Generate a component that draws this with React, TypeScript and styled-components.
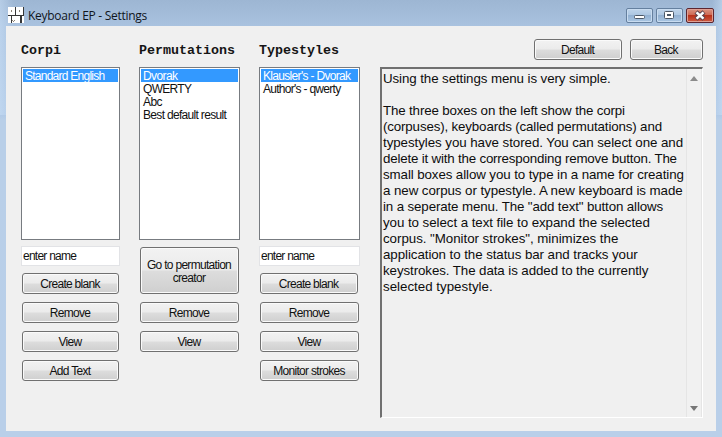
import React from 'react';
import styled, { createGlobalStyle } from 'styled-components';

const GlobalStyle = createGlobalStyle`
  *, *::before, *::after { box-sizing: border-box; }
  html, body { margin: 0; padding: 0; overflow: hidden; }
`;

const Window = styled.div`
  width: 722px;
  height: 437px;
  padding: 0 6px 6px;
  display: flex;
  flex-direction: column;
  color: #111;
  font-family: 'Liberation Sans', Arial, sans-serif;
  font-size: 12px;
  background:
    linear-gradient(90deg, rgba(205, 226, 248, 0.5), rgba(205, 226, 248, 0) 14px) 0 0 / 100% 115px no-repeat,
    linear-gradient(270deg, rgba(205, 226, 248, 0.5), rgba(205, 226, 248, 0) 10px) 0 0 / 100% 115px no-repeat,
    linear-gradient(180deg, #9db6d3 0, #a9c2df 26px, #b1cae7 115px, #b9cfe8 120px, #b9cfe9 100%);
`;

const TitleBar = styled.header`
  height: 26px;
  flex: none;
  display: flex;
  align-items: flex-start;
  padding: 7px 2px 0;
`;

const AppIcon = styled.svg`
  width: 16px;
  height: 16px;
  flex: none;
`;

const Title = styled.h1`
  margin: 1px 0 0 4px;
  font: 400 12px/16px 'Open Sans', 'Noto Sans', sans-serif;
  letter-spacing: -0.28px;
  color: #10151c;
  white-space: nowrap;
`;

const Controls = styled.div`
  display: flex;
  gap: 3px;
  margin: 1px 0 0 auto;
`;

const Control = styled.button<{ $danger?: boolean }>`
  width: ${(p) => (p.$danger ? 28 : 27)}px;
  height: 15px;
  padding: 0;
  display: flex;
  border: 1px solid ${(p) => (p.$danger ? '#5c2630' : '#65809f')};
  border-radius: 2px;
  box-shadow: inset 0 0 0 1px ${(p) => (p.$danger ? '#dfa094' : '#c9dcf0')};
  background: ${(p) =>
    p.$danger
      ? 'linear-gradient(#d99583 0, #cf6a55 45%, #b8321b 50%, #cf5b42 100%)'
      : 'linear-gradient(#bfd4ea 0, #adc7e2 45%, #93b1d2 50%, #aac6e3 100%)'};
`;

const Client = styled.main`
  flex: 1;
  display: flex;
  padding: 13px 13px 0 15px;
  background: #f0f0f0;
`;

const Column = styled.section<{ $width: number; $gap: number }>`
  width: ${(p) => p.$width}px;
  margin-right: ${(p) => p.$gap}px;
  flex: none;
  display: flex;
  flex-direction: column;
`;

const Heading = styled.h2`
  height: 28px;
  margin: 0;
  padding-top: 4px;
  font: 700 13.33px/16px 'Liberation Mono', 'Courier New', monospace;
  color: #151515;
`;

const List = styled.ul`
  height: 173px;
  margin: 0;
  padding: 1px;
  flex: none;
  list-style: none;
  background: #fff;
  border: 1px solid #777b80;
`;

const Item = styled.li<{ $selected?: boolean; $spacing: number }>`
  height: 13px;
  padding-left: 2px;
  line-height: 14px;
  letter-spacing: ${(p) => p.$spacing}px;
  white-space: nowrap;
  color: ${(p) => (p.$selected ? '#fff' : '#111')};
  background: ${(p) => (p.$selected ? '#3399ff' : 'transparent')};
`;

const Actions = styled.div`
  display: flex;
  flex-direction: column;
  gap: 8px;
  padding: 7px 1px 0;
`;

const NameField = styled.input`
  width: calc(100% + 2px);
  height: 20px;
  margin: -1px -1px -1px;
  padding: 0 0 1px 1px;
  border: 1px solid #e2e3e6;
  border-radius: 0;
  background: #fff;
  color: #111;
  font: 12px 'Liberation Sans', Arial, sans-serif;
  letter-spacing: -0.75px;
`;

const Button = styled.button<{ $height?: number; $width?: number }>`
  width: ${(p) => (p.$width ? `${p.$width}px` : '100%')};
  height: ${(p) => p.$height ?? 21}px;
  flex: none;
  padding: 2px 1px 0 0;
  border: 1px solid #707070;
  border-radius: 3px;
  box-shadow: inset 0 0 0 1px #fafafa;
  background: linear-gradient(#f2f2f2 0, #ebebeb 49%, #dddddd 51%, #cfcfcf 100%);
  color: #111;
  font: 12px/13px 'Liberation Sans', Arial, sans-serif;
  letter-spacing: -0.7px;
  white-space: pre-line;
`;

const HelpColumn = styled.section`
  flex: 1;
  min-width: 0;
  display: flex;
  flex-direction: column;
`;

const TopButtons = styled.div`
  height: 28px;
  flex: none;
  display: flex;
  justify-content: flex-end;
  gap: 8px;
`;

const HelpBox = styled.div`
  width: 323px;
  height: 351px;
  display: flex;
  border: 1px solid #fff;
  border-top: 2px solid #707070;
  border-left: 2px solid #707070;
`;

const HelpText = styled.div`
  flex: 1;
  min-width: 0;
  padding: 2px 0 0 1px;
  font-size: 13.33px;
  line-height: 16px;
  color: #0d0d0d;
`;

const HelpLine = styled.div<{ $spacing: number }>`
  height: 16px;
  letter-spacing: ${(p) => p.$spacing}px;
  white-space: pre;
`;

const ScrollBar = styled.div`
  width: 16px;
  flex: none;
  display: flex;
  flex-direction: column;
  justify-content: space-between;
  align-items: center;
  padding: 7px 0 6px;
  border-left: 1px solid #e5e5e5;
  border-right: 1px solid #e5e5e5;
  background: #f1f1f1;
`;

type Row = { text: string; spacing: number };

const permutations: Row[] = [
  { text: 'Dvorak', spacing: -0.6 },
  { text: 'QWERTY', spacing: -0.7 },
  { text: 'Abc', spacing: -0.6 },
  { text: 'Best default result', spacing: -0.68 },
];

const typestyles: Row[] = [
  { text: "Klausler's - Dvorak", spacing: -0.68 },
  { text: "Author's - qwerty", spacing: -0.72 },
];

const help: Row[] = [
  { text: 'Using the settings menu is very simple.', spacing: -0.09 },
  { text: '', spacing: 0 },
  { text: 'The three boxes on the left show the corpi', spacing: -0.15 },
  { text: '(corpuses), keyboards (called permutations) and', spacing: -0.15 },
  { text: 'typestyles you have stored. You can select one and', spacing: -0.06 },
  { text: 'delete it with the corresponding remove button. The', spacing: -0.19 },
  { text: 'small boxes allow you to type in a name for creating', spacing: -0.1 },
  { text: 'a new corpus or typestyle. A new keyboard is made', spacing: -0.07 },
  { text: 'in a seperate menu. The "add text" button allows', spacing: -0.13 },
  { text: 'you to select a text file to expand the selected', spacing: -0.06 },
  { text: 'corpus. "Monitor strokes", minimizes the', spacing: -0.04 },
  { text: 'application to the status bar and tracks your', spacing: -0.07 },
  { text: 'keystrokes. The data is added to the currently', spacing: -0.09 },
  { text: 'selected typestyle.', spacing: 0 },
];

function ListBox({ rows }: { rows: Row[] }) {
  return (
    <List>
      {rows.map((row, i) => (
        <Item key={row.text} $selected={i === 0} $spacing={row.spacing}>{row.text}</Item>
      ))}
    </List>
  );
}

export default function App() {
  return (
    <>
      <GlobalStyle />
      <Window>
        <TitleBar>
          <AppIcon viewBox="0 0 16 16" shapeRendering="crispEdges">
            <path fill="#363636" d="M0 0h16v16H0z" />
            <path fill="#fff" d="M0 0h7v8H0zM8 0h7v8H8zM0 9h3v7H0zM4 9h8v7H4zM14 9h2v7h-2z" />
            <path fill="#8b8276" d="M3 3h1v2H3zM11 3h1v2h-1zM4 13h1v1H4zM6 13h1v1H6zM5 14h1v1H5z" />
          </AppIcon>
          <Title>Keyboard EP - Settings</Title>
          <Controls>
            <Control aria-label="Minimize">
              <svg width="25" height="13"><rect x="7.5" y="6.5" width="10" height="3" rx="1" fill="#fff" stroke="#4b5766" /></svg>
            </Control>
            <Control aria-label="Maximize">
              <svg width="25" height="13"><rect x="7.5" y="2.5" width="9" height="7" rx="1" fill="#fff" stroke="#4b5766" /><rect x="10.5" y="5.5" width="3" height="1" fill="#8eadd0" stroke="#4b5766" /></svg>
            </Control>
            <Control $danger aria-label="Close">
              <svg width="26" height="13"><path d="M9 3l8 7M17 3l-8 7" stroke="#59414b" strokeWidth="4.4" /><path d="M9.5 3.4l7 6.2M16.5 3.4l-7 6.2" stroke="#fff" strokeWidth="2.6" /></svg>
            </Control>
          </Controls>
        </TitleBar>
        <Client>
          <Column $width={99} $gap={19}>
            <Heading>Corpi</Heading>
            <ListBox rows={[{ text: 'Standard English', spacing: -0.75 }]} />
            <Actions>
              <NameField defaultValue="enter name" />
              <Button>Create blank</Button>
              <Button>Remove</Button>
              <Button>View</Button>
              <Button>Add Text</Button>
            </Actions>
          </Column>
          <Column $width={101} $gap={19}>
            <Heading>Permutations</Heading>
            <ListBox rows={permutations} />
            <Actions>
              <Button $height={47}>{'Go to permutation\ncreator'}</Button>
              <Button>Remove</Button>
              <Button>View</Button>
            </Actions>
          </Column>
          <Column $width={101} $gap={20}>
            <Heading>Typestyles</Heading>
            <ListBox rows={typestyles} />
            <Actions>
              <NameField defaultValue="enter name" />
              <Button $width={98}>Create blank</Button>
              <Button>Remove</Button>
              <Button>View</Button>
              <Button>Monitor strokes</Button>
            </Actions>
          </Column>
          <HelpColumn>
            <TopButtons>
              <Button $width={88}>Default</Button>
              <Button $width={73}>Back</Button>
            </TopButtons>
            <HelpBox>
              <HelpText>
                {help.map((line, i) => (
                  <HelpLine key={i} $spacing={line.spacing}>{line.text}</HelpLine>
                ))}
              </HelpText>
              <ScrollBar>
                <svg width="8" height="5"><path d="M0 5L4 0l4 5z" fill="#8b8b8b" /></svg>
                <svg width="8" height="5"><path d="M0 0l4 5 4-5z" fill="#777" /></svg>
              </ScrollBar>
            </HelpBox>
          </HelpColumn>
        </Client>
      </Window>
    </>
  );
}
